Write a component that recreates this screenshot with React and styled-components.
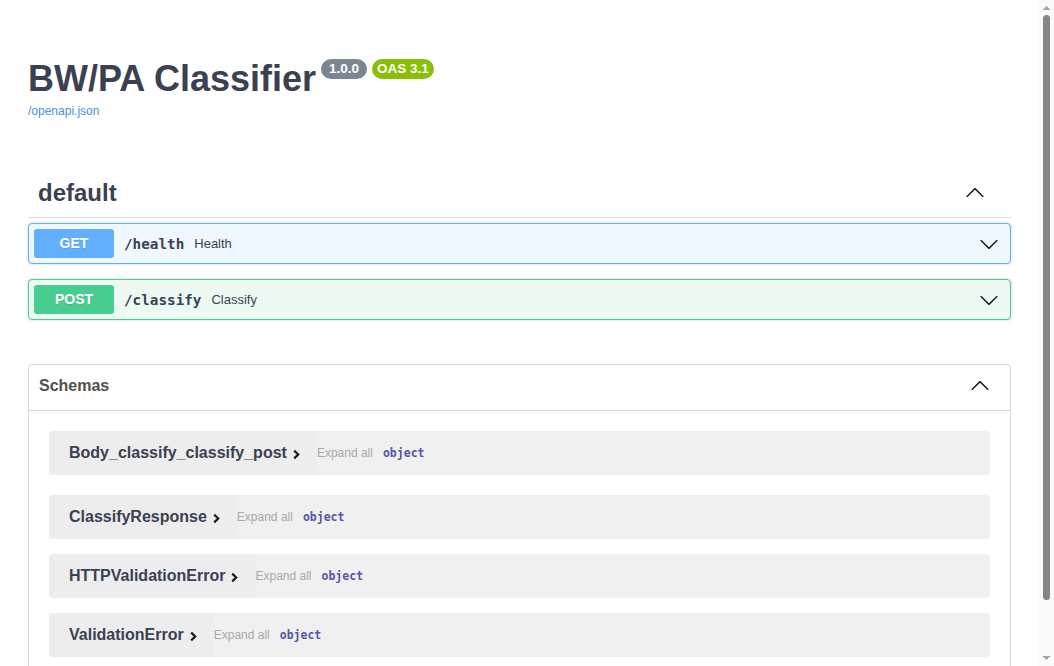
import styled, { createGlobalStyle } from "styled-components";

const GlobalStyle = createGlobalStyle`
  body {
    margin: 8px 23px 8px 8px;
    background: #fff;
    font-family: "Liberation Sans", Arial, sans-serif;
    color: #3b4151;
  }
`;

const operations = [
  { method: "GET", path: "/health", summary: "Health", color: "#61affe", bg: "#eff7ff" },
  { method: "POST", path: "/classify", summary: "Classify", color: "#49cc90", bg: "#edfaf4" },
];

const schemas = ["Body_classify_classify_post", "ClassifyResponse", "HTTPValidationError", "ValidationError"];

const Arrow = ({ up, size = 20 }) => (
  <svg width={size} height={size} viewBox="0 0 20 20" style={up ? { transform: "rotate(180deg)" } : undefined}>
    <path
      fill="#1a1a1a"
      d="M17.418 6.109c.272-.268.709-.268.979 0s.271.701 0 .969l-7.908 7.83c-.27.268-.707.268-.979 0l-7.908-7.83c-.27-.268-.27-.701 0-.969.271-.268.709-.268.979 0L10 13.25l7.418-7.141z"
    />
  </svg>
);

const App = () => {
  return (
    <Wrapper>
      <GlobalStyle />
      <Info>
        <TitleRow>
          <Title>BW/PA Classifier</Title>
          <Badge $bg="#7d8492" $pad="8px">1.0.0</Badge>
          <Badge $bg="#89bf04" $pad="5px">OAS 3.1</Badge>
        </TitleRow>
        <SpecLink>/openapi.json</SpecLink>
      </Info>

      <TagSection>
        <TagHeader>
          <TagName>default</TagName>
          <IconButton $pad="6px">
            <Arrow up />
          </IconButton>
        </TagHeader>
        {operations.map((op) => (
          <OpBlock key={op.path} $color={op.color} $bg={op.bg}>
            <MethodBadge $color={op.color}>{op.method}</MethodBadge>
            <OpPath>{op.path}</OpPath>
            <OpSummary>{op.summary}</OpSummary>
            <IconButton $pad="6px">
              <Arrow />
            </IconButton>
          </OpBlock>
        ))}
      </TagSection>

      <Models>
        <ModelsHeader>
          <span>Schemas</span>
          <IconButton $pad="0">
            <Arrow up />
          </IconButton>
        </ModelsHeader>
        <ModelList>
          {schemas.map((name) => (
            <ModelContainer key={name}>
              <ModelBox>
                <ModelTitle>{name}</ModelTitle>
                <Toggle width="9" height="11" viewBox="0 0 9 11">
                  <path d="M2.2 1.6 L6.2 5.5 L2.2 9.4" fill="none" stroke="#1a1a1a" strokeWidth="2.2" />
                </Toggle>
              </ModelBox>
              <ExpandAll>Expand all</ExpandAll>
              <PropType>object</PropType>
            </ModelContainer>
          ))}
        </ModelList>
      </Models>

      <ScrollTrack>
        <ScrollButton viewBox="0 0 15 15">
          <path d="M3.5 10 L7.5 6 L11.5 10 Z" fill="#a3a3a3" />
        </ScrollButton>
        <ScrollThumb />
        <ScrollButton viewBox="0 0 15 15">
          <path d="M3.5 5 L7.5 9 L11.5 5 Z" fill="#a3a3a3" />
        </ScrollButton>
      </ScrollTrack>
    </Wrapper>
  );
};

export default App;

const Wrapper = styled.div`
  padding: 0 20px 60px;
  max-width: 1460px;
`;

const Info = styled.div`
  margin: 50px 0 50px;
`;

const TitleRow = styled.div`
  display: flex;
  align-items: flex-start;
`;

const Title = styled.h2`
  margin: 0;
  font-size: 36px;
  font-weight: 700;
  line-height: 41px;
  color: #3b4151;
`;

const Badge = styled.span`
  margin: 1px 0 0 5px;
  padding: 2px ${(p) => p.$pad};
  background: ${(p) => p.$bg};
  border-radius: 57px;
  color: #fff;
  font-size: 13.5px;
  font-weight: 700;
  line-height: 16px;
`;

const SpecLink = styled.a`
  display: block;
  margin-top: 5px;
  font-size: 12px;
  line-height: 15px;
  color: #4990e2;
`;

const TagSection = styled.div`
  display: flex;
  flex-direction: column;
`;

const TagHeader = styled.div`
  display: flex;
  align-items: center;
  padding: 10px 20px 10px 10px;
  margin-bottom: 5px;
  border-bottom: 1px solid #dadbde;
`;

const TagName = styled.h3`
  flex: 1;
  margin: 0;
  font-size: 24px;
  font-weight: 700;
  line-height: 28px;
  color: #3b4151;
`;

const IconButton = styled.button`
  display: flex;
  align-items: center;
  border: none;
  background: none;
  padding: 0 ${(p) => p.$pad};
  cursor: pointer;
`;

const OpBlock = styled.div`
  display: flex;
  align-items: center;
  padding: 5px;
  margin-bottom: 15px;
  border: 1px solid ${(p) => p.$color};
  border-radius: 4px;
  background: ${(p) => p.$bg};
  box-shadow: 0 0 3px rgba(0, 0, 0, 0.19);
`;

const MethodBadge = styled.span`
  min-width: 80px;
  padding: 6px 0;
  border-radius: 3px;
  background: ${(p) => p.$color};
  color: #fff;
  font-size: 14px;
  font-weight: 700;
  line-height: 17px;
  text-align: center;
  text-shadow: 0 1px 0 rgba(0, 0, 0, 0.1);
`;

const OpPath = styled.span`
  padding: 0 10px;
  font-family: "DejaVu Sans Mono", "Liberation Mono", monospace;
  font-size: 14.3px;
  font-weight: 700;
  color: #3b4151;
`;

const OpSummary = styled.span`
  flex: 1;
  font-size: 13px;
  color: #3b4151;
`;

const Models = styled.section`
  margin: 29px 0 30px;
  border: 1px solid #d8d9dc;
  border-radius: 4px;
`;

const ModelsHeader = styled.h4`
  display: flex;
  align-items: center;
  justify-content: space-between;
  margin: 0;
  padding: 8px 20px 12px 10px;
  height: 25px;
  border-bottom: 1px solid #d8d9dc;
  font-size: 16px;
  font-weight: 700;
  color: #505050;
`;

const ModelList = styled.div`
  display: flex;
  flex-direction: column;
  gap: 15px;
  padding: 20px;

  & > :first-child {
    margin-bottom: 5px;
  }
`;

const ModelContainer = styled.div`
  display: flex;
  align-items: center;
  height: 44px;
  background: #f0f0f0;
  border-radius: 4px;
`;

const ModelBox = styled.div`
  display: flex;
  align-items: center;
  height: 100%;
  padding: 0 16px 0 20px;
  background: #ededed;
  border-radius: 4px 0 0 4px;
`;

const ModelTitle = styled.span`
  font-size: 16px;
  font-weight: 700;
  color: #3b4151;
`;

const Toggle = styled.svg`
  margin-left: 5px;
  margin-top: 2px;
`;

const ExpandAll = styled.span`
  font-size: 12px;
  color: #a8a8a8;
  margin-right: 10px;
`;

const PropType = styled.span`
  font-family: "DejaVu Sans Mono", "Liberation Mono", monospace;
  font-size: 11.5px;
  font-weight: 700;
  color: #55a;
`;

/* window scrollbar as in the screenshot, drawn over the right edge */
const ScrollTrack = styled.div`
  position: fixed;
  top: 0;
  right: 0;
  bottom: 0;
  width: 15px;
  display: flex;
  flex-direction: column;
  background: #fafafa;
`;

const ScrollButton = styled.svg`
  width: 15px;
  height: 15px;
  flex: none;
`;

const ScrollThumb = styled.div`
  flex: none;
  height: 585px;
  margin: 0 4px auto 4px;
  border-radius: 4px;
  background: #858585;
`;
